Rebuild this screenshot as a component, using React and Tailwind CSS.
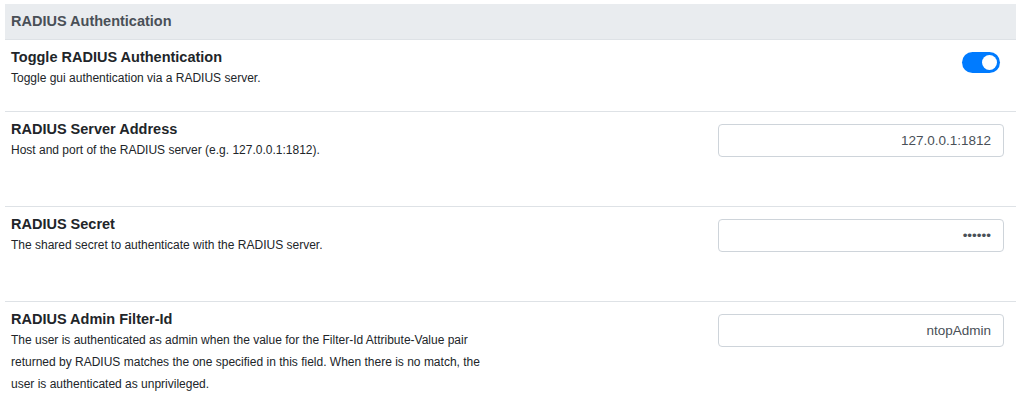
import { useState } from 'react';

const rows = [
  {
    id: 'toggle',
    title: 'Toggle RADIUS Authentication',
    desc: 'Toggle gui authentication via a RADIUS server.',
    kind: 'switch',
    h: 'min-h-[72px]',
  },
  {
    id: 'address',
    title: 'RADIUS Server Address',
    desc: 'Host and port of the RADIUS server (e.g. 127.0.0.1:1812).',
    kind: 'text',
    value: '127.0.0.1:1812',
    h: 'min-h-[95px]',
  },
  {
    id: 'secret',
    title: 'RADIUS Secret',
    desc: 'The shared secret to authenticate with the RADIUS server.',
    kind: 'password',
    value: 'secret',
    h: 'min-h-[95px]',
  },
  {
    id: 'filter',
    title: 'RADIUS Admin Filter-Id',
    desc: 'The user is authenticated as admin when the value for the Filter-Id Attribute-Value pair returned by RADIUS matches the one specified in this field. When there is no match, the user is authenticated as unprivileged.',
    kind: 'text',
    value: 'ntopAdmin',
    h: 'min-h-[95px]',
  },
];

function Switch() {
  const [on, setOn] = useState(true);
  return (
    <button
      onClick={() => setOn(o => !o)}
      className={`mr-[4px] w-[38px] h-[21px] rounded-full flex items-center px-[3px] ${
        on ? 'bg-[#007bff] justify-end' : 'bg-[#ced4da] justify-start'
      }`}
    >
      <span className="w-[15px] h-[15px] rounded-full bg-white block" />
    </button>
  );
}

function Field({ row }) {
  const [val, setVal] = useState(row.value);
  return (
    <input
      type={row.kind}
      value={val}
      onChange={e => setVal(e.target.value)}
      className="w-[286px] h-[33px] border border-[#ced4da] rounded-[4px] px-3 text-right text-[13.5px] text-[#495057] bg-white outline-none"
    />
  );
}

export default function App() {
  return (
    <div
      className="bg-white w-[1021px] h-[401px] overflow-hidden px-[5px] pt-[4px]"
      style={{ fontFamily: '"Liberation Sans", Arial, sans-serif' }}
    >
      <div className="h-[35px] bg-[#e9ecef] flex items-center pl-[6px] text-[14.5px] font-bold text-[#495057]">
        RADIUS Authentication
      </div>

      {rows.map(row => (
        <div key={row.id} className={`border-t border-[#dee2e6] flex justify-between ${row.h}`}>
          <div className="pl-[6px] pt-[8px] w-[500px]">
            <div className="text-[14.5px] leading-[19px] font-bold text-[#212529]">{row.title}</div>
            <div className="text-[12px] leading-[22px] text-[#212529]">{row.desc}</div>
          </div>
          <div className="pt-[12px] pr-[12px]">
            {row.kind === 'switch' ? <Switch /> : <Field row={row} />}
          </div>
        </div>
      ))}
    </div>
  );
}
